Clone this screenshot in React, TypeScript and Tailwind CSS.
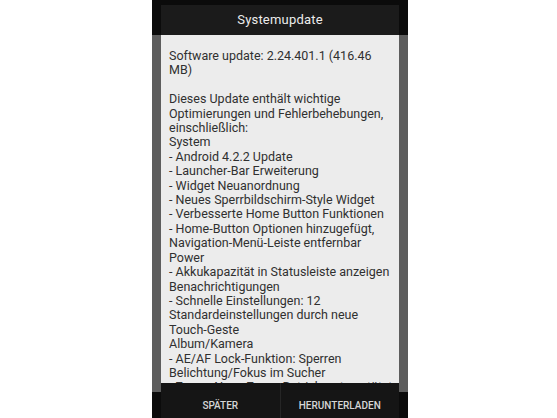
import React from 'react';

const lines: string[] = [
  'Software update: 2.24.401.1 (416.46',
  'MB)',
  '',
  'Dieses Update enthält wichtige',
  'Optimierungen und Fehlerbehebungen,',
  'einschließlich:',
  'System',
  '- Android 4.2.2 Update',
  '- Launcher-Bar Erweiterung',
  '- Widget Neuanordnung',
  '- Neues Sperrbildschirm-Style Widget',
  '- Verbesserte Home Button Funktionen',
  '- Home-Button Optionen hinzugefügt,',
  'Navigation-Menü-Leiste entfernbar',
  'Power',
  '- Akkukapazität in Statusleiste anzeigen',
  'Benachrichtigungen',
  '- Schnelle Einstellungen: 12',
  'Standardeinstellungen durch neue',
  'Touch-Geste',
  'Album/Kamera',
  '- AE/AF Lock-Funktion: Sperren',
  'Belichtung/Fokus im Sucher',
  '- Zoom: Neue Zoom-Betriebsart gestützt',
];

const App: React.FC = () => {
  return (
    <div className="w-[557px] h-[418px] bg-white flex overflow-hidden font-['Roboto',sans-serif]">
      {/* Phone screen, dimmed behind the dialog */}
      <div className="ml-[152px] w-[256px] h-full overflow-hidden px-[9px] pt-[5px] bg-[linear-gradient(to_bottom,#0b0b0b_35px,#5d5d5d_35px,#5d5d5d_392px,#0b0b0b_392px)]">
        {/* Dialog */}
        <div className="flex flex-col w-[238px]">
          <div className="h-[30px] bg-[#1b1b1b] flex items-center justify-center">
            <span className="text-[13px] text-[#ececec] tracking-[0.2px]">Systemupdate</span>
          </div>

          <div className="h-[348px] bg-[#ececec] overflow-hidden pl-[8px] pt-[14px]">
            {lines.map((line, i) => (
              <div
                key={i}
                className="h-[14.42px] leading-[14.42px] text-[12.5px] text-[#303030] whitespace-nowrap"
              >
                {line}
              </div>
            ))}
          </div>

          <div className="h-[44px] bg-[#151515] flex">
            <div className="flex-1 flex items-center justify-center border-r border-[#262626]">
              <span className="text-[10px] font-medium text-[#d6d6d6]">SPÄTER</span>
            </div>
            <div className="flex-1 flex items-center justify-center">
              <span className="text-[10px] font-medium text-[#d6d6d6]">HERUNTERLADEN</span>
            </div>
          </div>
        </div>
      </div>
    </div>
  );
};

export default App;
